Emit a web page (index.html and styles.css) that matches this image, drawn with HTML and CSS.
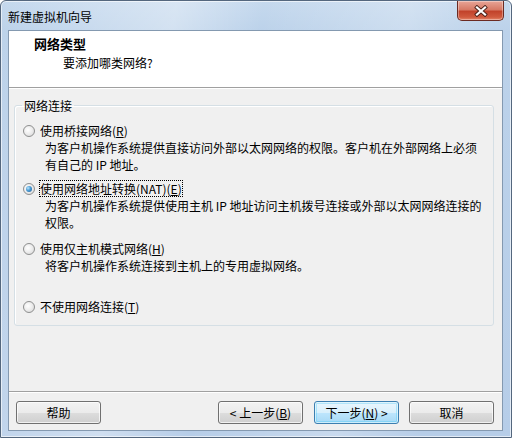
FILE: index.html
```html
<!DOCTYPE html>
<html lang="zh-CN">
<head>
<meta charset="utf-8">
<title>新建虚拟机向导</title>
<link rel="stylesheet" href="styles.css">
</head>
<body>
<div class="window">
  <div class="titlebar">
    <span class="title">新建虚拟机向导</span>
    <div class="close">
      <svg width="14" height="12" viewBox="-7 -6 14 12">
        <path d="M-4 -3.5 L4 3.5 M4 -3.5 L-4 3.5" stroke="#4a2118" stroke-width="4" stroke-linecap="square"/>
        <path d="M-4 -3.5 L4 3.5 M4 -3.5 L-4 3.5" stroke="#ffffff" stroke-width="2.2" stroke-linecap="square"/>
      </svg>
    </div>
  </div>
  <div class="client">
    <div class="header">
      <div class="h-title">网络类型</div>
      <div class="h-sub">要添加哪类网络?</div>
    </div>
    <div class="content">
      <fieldset class="group">
        <legend class="legend">网络连接</legend>
        <div class="option opt1">
          <div class="line"><span class="radio"></span><span class="label">使用桥接网络(<u>R</u>)</span></div>
          <div class="desc">为客户机操作系统提供直接访问外部以太网网络的权限。客户机在外部网络上必须<br>有自己的 IP 地址。</div>
        </div>
        <div class="option opt2">
          <div class="line"><span class="radio checked"></span><span class="label focus">使用网络地址转换(NAT)(<u>E</u>)</span></div>
          <div class="desc">为客户机操作系统提供使用主机 IP 地址访问主机拨号连接或外部以太网网络连接的<br>权限。</div>
        </div>
        <div class="option opt3">
          <div class="line"><span class="radio"></span><span class="label">使用仅主机模式网络(<u>H</u>)</span></div>
          <div class="desc">将客户机操作系统连接到主机上的专用虚拟网络。</div>
        </div>
        <div class="option opt4">
          <div class="line"><span class="radio"></span><span class="label">不使用网络连接(<u>T</u>)</span></div>
        </div>
      </fieldset>
    </div>
    <div class="footer">
      <button class="btn">帮助</button>
      <div class="spacer"></div>
      <button class="btn">&lt; 上一步(<u>B</u>)</button>
      <button class="btn default next">下一步(<u>N</u>) &gt;</button>
      <button class="btn cancel">取消</button>
    </div>
  </div>
</div>
</body>
</html>
```

FILE: styles.css
```css
* { box-sizing: border-box; }
html, body {
  margin: 0;
  padding: 0;
  background: #ffffff;
}
body {
  font-family: "Noto Sans CJK SC", "Liberation Sans", sans-serif;
  font-size: 12px;
  color: #000;
}
.window {
  width: 512px;
  height: 438px;
  display: flex;
  flex-direction: column;
  padding: 0 8px 6px 7px;
  border: 1px solid #54677e;
  border-radius: 6px 6px 0 0;
  background:
    linear-gradient(100deg, rgba(255,255,255,0) 0%, rgba(255,255,255,0.35) 30%, rgba(255,255,255,0) 45%, rgba(255,255,255,0.25) 70%, rgba(255,255,255,0) 85%),
    linear-gradient(180deg, #c5d9ee 0%, #bcd2ea 30px, #b6cde8 100%);
  box-shadow: inset 0 0 0 1px rgba(255,255,255,0.6);
}
.titlebar {
  height: 29px;
  display: flex;
  align-items: flex-start;
  justify-content: space-between;
}
.title {
  line-height: 16px;
  margin-top: 8px;
  color: #000;
}
.close {
  width: 47px;
  height: 20px;
  margin-right: -1px;
  border: 1px solid #6b2a22;
  border-top: none;
  border-radius: 0 0 5px 5px;
  background: linear-gradient(180deg, #e8a597 0%, #d77a66 45%, #c2432b 55%, #d05a3e 85%, #e4876c 100%);
  box-shadow: inset 0 0 0 1px rgba(255,255,255,0.35);
  display: flex;
  align-items: center;
  justify-content: center;
}
.client {
  flex: 1;
  display: flex;
  flex-direction: column;
  border: 1px solid #8499b0;
  background: #f0f0f0;
}
.header {
  height: 57px;
  background: #ffffff;
  border-bottom: 1px solid #a0a0a0;
  padding: 5px 0 0 25px;
  box-shadow: 0 1px 0 #ffffff;
}
.h-title {
  font-weight: bold;
  font-size: 13px;
  line-height: 16px;
}
.h-sub {
  line-height: 16px;
  margin-top: 3px;
  padding-left: 29px;
}
.content {
  flex: 1;
  padding: 9px 8px 0 5px;
}
.group {
  margin: 0;
  padding: 0 0 10px 0;
  border: 1px solid #d5dfe5;
  border-radius: 3px;
  box-shadow: inset 1px 1px 0 #ffffff;
  min-width: 0;
}
.legend {
  margin-left: 7px;
  padding: 0 2px;
  line-height: 17px;
}
.option {
  padding-left: 8px;
}
.opt1 { margin-top: 8px; }
.opt2 { margin-top: 7px; }
.opt3 { margin-top: 9px; }
.opt4 { margin-top: 24px; }
.line {
  display: flex;
  align-items: center;
  height: 17px;
}
.radio {
  width: 12px;
  height: 12px;
  border-radius: 50%;
  border: 1px solid #8e8f8f;
  background: radial-gradient(circle at 40% 40%, #ffffff 0%, #eeeeee 45%, #d3d3d3 100%);
  margin-right: 4px;
  position: relative;
  flex: none;
}
.radio.checked::after {
  content: "";
  position: absolute;
  left: 2px;
  top: 2px;
  width: 6px;
  height: 6px;
  border-radius: 50%;
  background: radial-gradient(circle at 35% 35%, #b9e6fd 0%, #4a9ad3 45%, #1c5a91 100%);
}
.label {
  line-height: 17px;
  padding: 0 1px;
}
.label.focus {
  outline: 1px dotted #000;
  outline-offset: -1px;
}
.desc {
  margin-left: 22px;
  line-height: 17px;
}
u {
  text-decoration: underline;
  text-underline-offset: 1px;
}
.footer {
  height: 39px;
  border-top: 1px solid #a0a0a0;
  box-shadow: inset 0 1px 0 #ffffff;
  display: flex;
  align-items: flex-start;
  padding: 9px 8px 0 7px;
}
.spacer { flex: 1; }
.btn {
  width: 85px;
  height: 23px;
  font-family: inherit;
  font-size: 12px;
  color: #000;
  padding: 0;
  border: 1px solid #707070;
  border-radius: 3px;
  background: linear-gradient(180deg, #f2f2f2 0%, #ebebeb 50%, #dddddd 51%, #cfcfcf 100%);
  box-shadow: inset 0 0 0 1px rgba(255,255,255,0.7);
  line-height: 20px;
}
.btn.default {
  border-color: #3c7fb1;
  background: linear-gradient(180deg, #eaf6fd 0%, #d9f0fc 50%, #bee6fd 51%, #a7d9f5 100%);
  box-shadow: inset 0 0 0 1px rgba(255,255,255,0.6), inset 0 0 0 2px rgba(72,200,247,0.35);
}
.next { margin-left: 11px; }
.cancel { margin-left: 10px; }
```
